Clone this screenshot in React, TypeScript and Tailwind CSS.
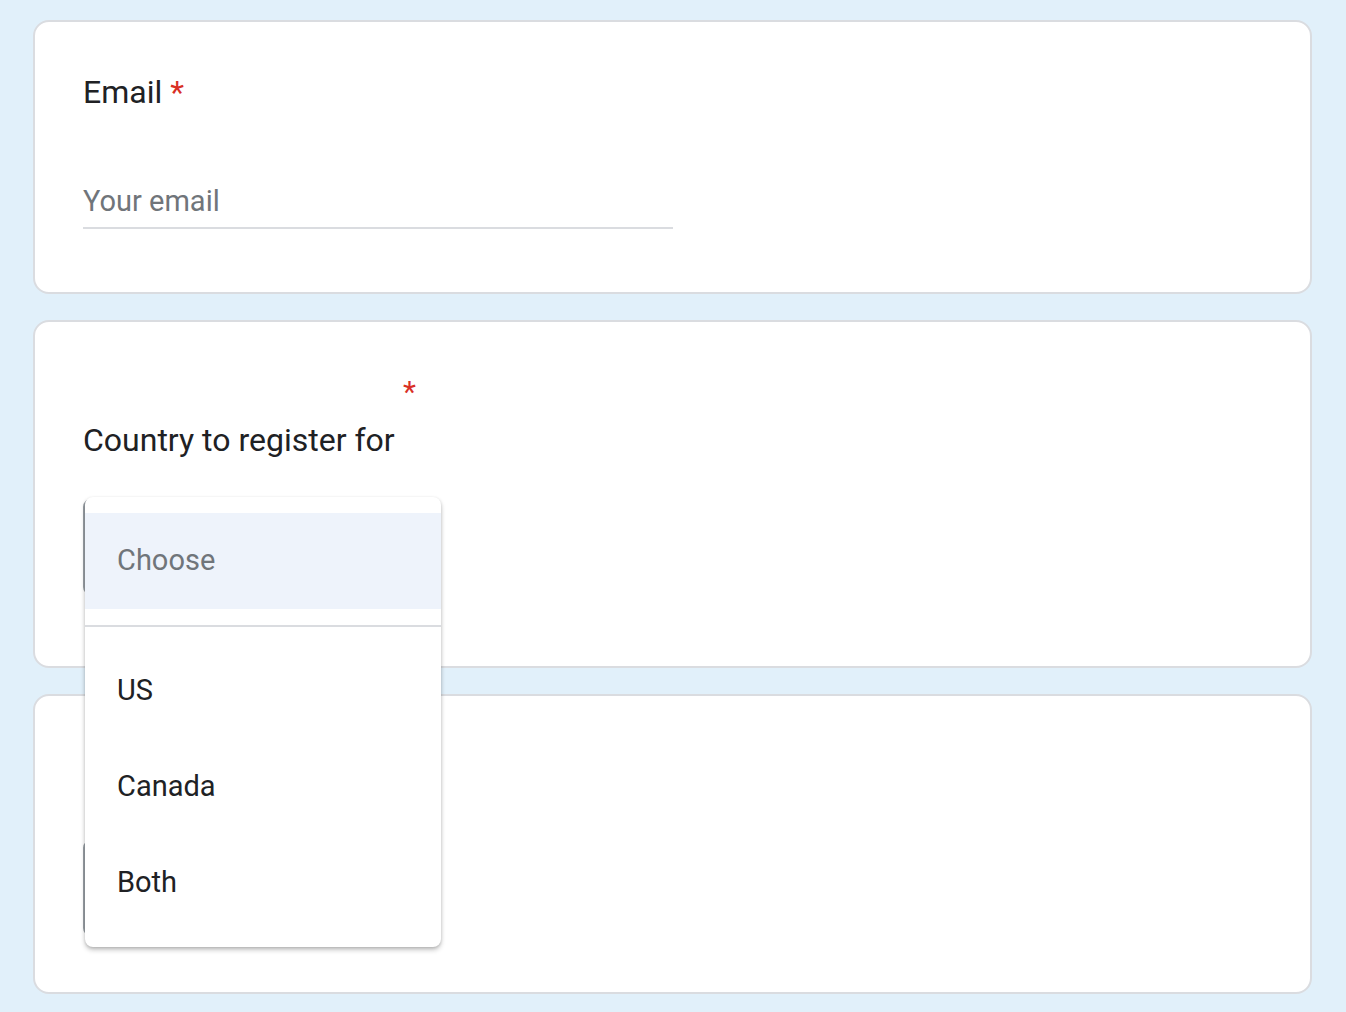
import React from "react";

const Asterisk = ({ className = "" }: { className?: string }) => (
  <span className={`text-[#d93025] ${className}`}>*</span>
);

const App: React.FC = () => {
  const options = ["US", "Canada", "Both"];

  return (
    <div className="relative min-h-[1012px] bg-[#e1f0fa] pt-5 pb-4 font-['Roboto',sans-serif] text-[#202124]">
      <div className="ml-[33px] mr-[34px] flex flex-col gap-[26px]">
        {/* Email */}
        <div className="h-[274px] rounded-2xl border-2 border-[#dadce0] bg-white pl-12 pt-[50px]">
          <div className="text-[32px] leading-10">
            Email <Asterisk />
          </div>
          <div className="mt-[71px] w-[590px] border-b-2 border-[#dadce0] pb-2 text-[29px] leading-9 text-[#70757a]">
            Your email
          </div>
        </div>

        {/* Country */}
        <div className="h-[348px] rounded-2xl border-2 border-[#dadce0] bg-white pl-12 pt-[60px]">
          <div className="flex w-[336px] justify-end pr-[3px] text-[30px] leading-5">
            <Asterisk />
          </div>
          <div className="mt-[18px] text-[32px] leading-10">Country to register for</div>
          <div className="mt-[39px] h-24 w-[300px] rounded-lg border-2 border-[#9aa0a6]" />
        </div>

        {/* Third question, covered by the open menu */}
        <div className="h-[300px] rounded-2xl border-2 border-[#dadce0] bg-white pl-12 pt-[144px]">
          <div className="h-24 w-[300px] rounded-lg border-2 border-[#9aa0a6]" />
        </div>
      </div>

      {/* open select menu */}
      <div className="absolute left-[85px] top-[497px] w-[356px] rounded-lg bg-white py-4 shadow-[0_3px_5px_rgba(0,0,0,0.22),0_1px_3px_rgba(0,0,0,0.14)]">
        <div className="flex h-24 items-center bg-[#eef3fb] pl-8 text-[29px] text-[#70757a]">
          Choose
        </div>
        <div className="my-4 h-[2px] bg-[#dadce0]" />
        {options.map((o) => (
          <div key={o} className="flex h-24 items-center pl-8 text-[29px]">
            {o}
          </div>
        ))}
      </div>
    </div>
  );
};

export default App;
